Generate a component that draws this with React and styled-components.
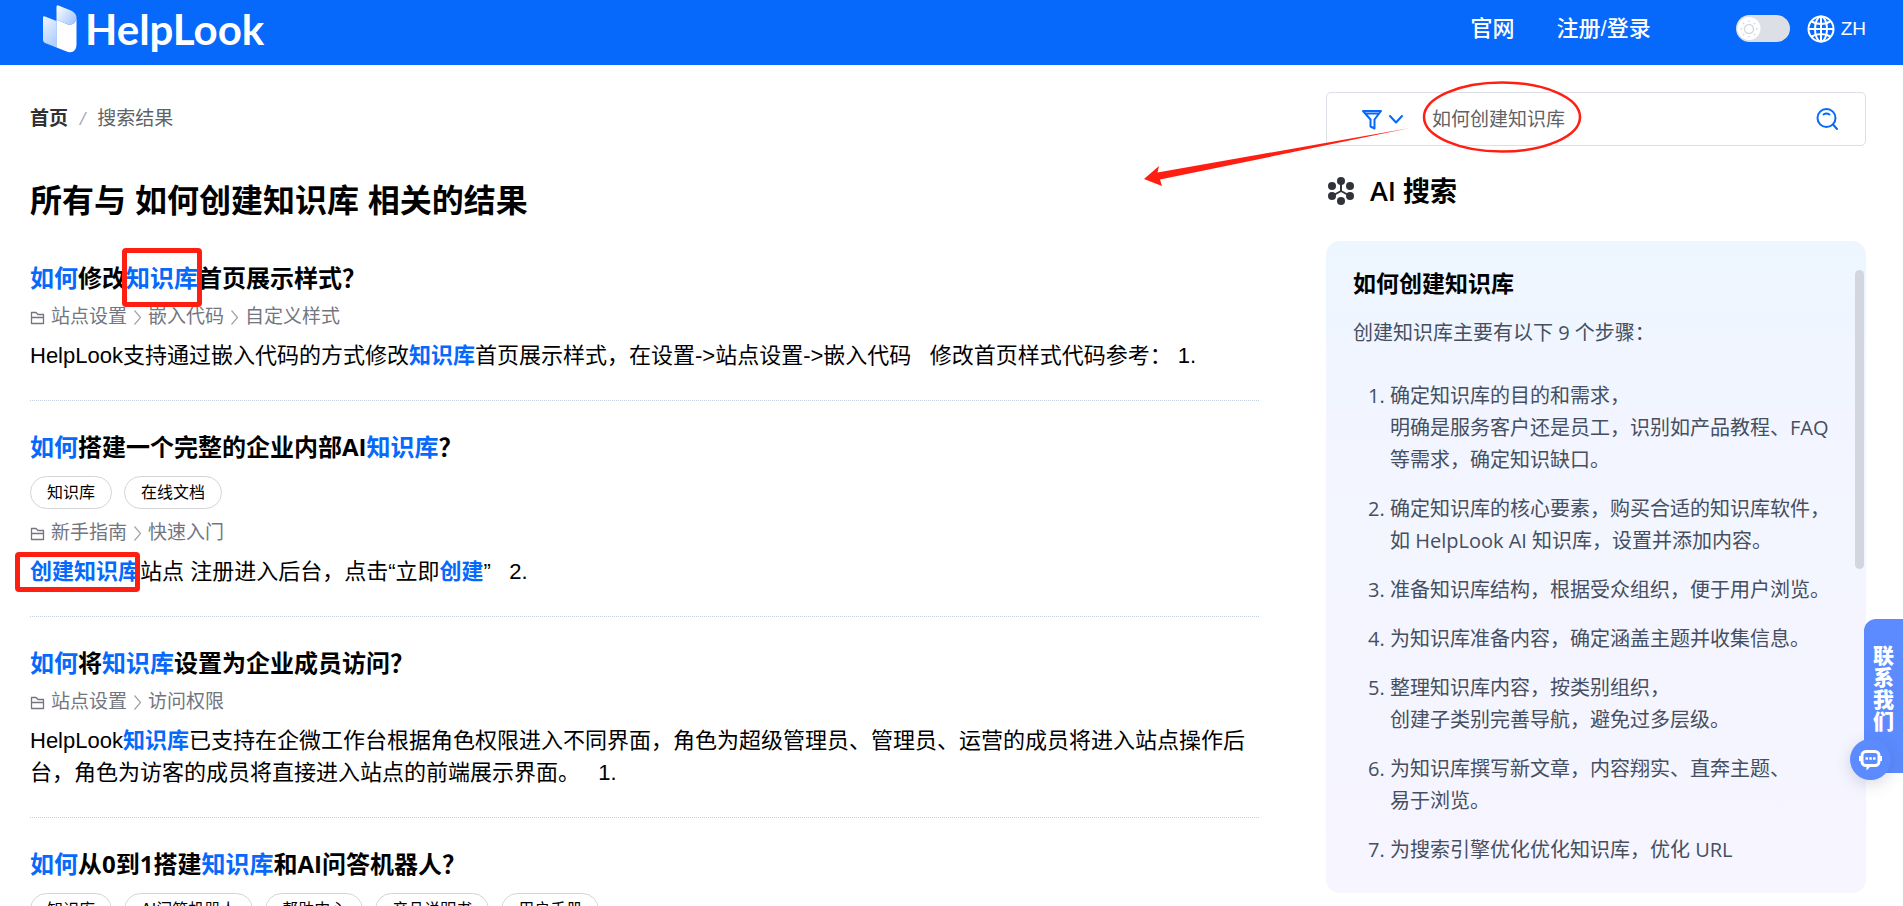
import React from "react";
import styled, { createGlobalStyle } from "styled-components";

const GlobalStyle = createGlobalStyle`
  *, *::before, *::after { box-sizing: border-box; }
  body {
    margin: 0;
    color: #000;
    background: #fff;
    font-family: "Liberation Sans", "Noto Sans CJK SC", sans-serif;
    font-size: 22px;
  }
  button, input { font: inherit; color: inherit; }
  button { padding: 0; border: 0; background: none; cursor: pointer; }
  a { color: inherit; text-decoration: none; }
  svg { display: block; flex: none; }
  h1, h2, h3, p, ol, ul { margin: 0; padding: 0; }
`;

const humanist = `"Open Sans", "Noto Sans CJK SC", sans-serif`;
const blue = "#0669fb";
const red = "#ff1e12";

const Page = styled.div`
  height: 100vh;
  overflow: hidden auto;
  scrollbar-width: none;
`;

const Header = styled.header`
  display: flex;
  align-items: center;
  justify-content: space-between;
  height: 65px;
  padding: 0 37px 8px 43px;
  color: #fff;
  background: ${blue};
`;

const Brand = styled.a`
  display: flex;
  align-items: center;
  gap: 7px;
  font: 700 42px/48px Lato, "Liberation Sans", sans-serif;
`;

const Nav = styled.nav`
  display: flex;
  align-items: center;
  gap: 42px;
  font-weight: 500;
  line-height: 32px;
`;

const Tools = styled.div`
  display: flex;
  align-items: center;
  gap: 17px;
  margin-left: 43px;
`;

const ThemeSwitch = styled.label`
  position: relative;
  display: block;
  width: 54px;
  height: 27px;
  svg {
    position: absolute;
    top: 4px;
    left: 3px;
    pointer-events: none;
  }
`;

const SwitchInput = styled.input`
  display: block;
  appearance: none;
  width: 100%;
  height: 100%;
  margin: 0;
  border-radius: 14px;
  background: radial-gradient(circle at 13px 50%, #fff 11px, transparent 12px) #dcdfe6;
`;

const Language = styled.button`
  display: flex;
  align-items: center;
  gap: 6px;
  font-size: 19px;
  font-weight: 500;
`;

const Main = styled.main`
  display: grid;
  grid-template-columns: minmax(0, 1fr) 540px;
  column-gap: 67px;
  padding: 27px 37px 13px 30px;
`;

const Results = styled.section`
  padding-top: 13px;
`;

const Breadcrumb = styled.nav`
  display: flex;
  gap: 12px;
  color: #606266;
  font-size: 19px;
  line-height: 28px;
  a { color: #303133; font-weight: 700; }
  i { color: #a8abb2; }
`;

const Title = styled.h1`
  margin-top: 44px;
  font-size: 32px;
  line-height: 48px;
`;

const ResultList = styled.ul`
  margin-top: 7px;
  list-style: none;
`;

const Result = styled.li`
  padding: 28px 0;
  border-bottom: 1px dotted #c3cede;
`;

const ResultTitle = styled.h2`
  font-family: ${humanist};
  font-size: 24px;
  line-height: 36px;
`;

const Tags = styled.div`
  display: flex;
  flex-wrap: wrap;
  gap: 12px;
  padding: 11px 0 3px;
`;

const Tag = styled.a`
  padding: 0 16px;
  border: 1px solid #d4d4d8;
  border-radius: 17px;
  font-size: 16px;
  line-height: 31px;
`;

const Path = styled.div`
  display: flex;
  align-items: center;
  gap: 6px;
  margin-top: 7px;
  color: #73767f;
  font-size: 19px;
  line-height: 28px;
`;

const Excerpt = styled.p`
  margin-top: 9px;
  line-height: 32px;
`;

const Hit = styled.em`
  color: ${blue};
  font-style: normal;
  font-weight: 700;
`;

const BoxedHit = styled(Hit)`
  position: relative;
  display: inline-block;
  &::after {
    content: "";
    position: absolute;
    inset: ${(p) => p.$outset};
    border: 5px solid ${red};
    border-radius: 4px;
  }
`;

const SearchBox = styled.form`
  position: relative;
  display: flex;
  align-items: center;
  height: 54px;
  padding: 0 26px 0 34px;
  border: 1px solid #dcdfe6;
  border-radius: 5px;
  color: ${blue};
`;

const FilterButton = styled.button`
  display: flex;
  align-items: center;
  gap: 5px;
`;

const SearchInput = styled.input`
  flex: 1;
  min-width: 0;
  margin-left: 28px;
  padding: 2px 0 0;
  border: 0;
  outline: 0;
  background: none;
  color: #606266;
  font-size: 19px;
  line-height: 28px;
`;

const SearchMarkup = styled.svg`
  position: absolute;
  top: -12px;
  left: -185px;
  pointer-events: none;
`;

const AiHeading = styled.h2`
  display: flex;
  align-items: center;
  gap: 15px;
  margin-top: 25px;
  font: 600 27px/40px ${humanist};
`;

const AnswerCard = styled.article`
  position: relative;
  margin-top: 30px;
  padding: 26px 27px 27px;
  border-radius: 14px;
  color: #454f5f;
  background: linear-gradient(#edf6ff, #f2f5ff 26%, #f7f5ff);
  font: 20px/32px ${humanist};
`;

const AnswerTitle = styled.h3`
  color: #000;
  font-size: 23px;
  line-height: 32px;
`;

const AnswerLead = styled.p`
  margin-top: 18px;
`;

const Steps = styled.ol`
  display: grid;
  gap: 17px;
  margin-top: 31px;
  padding-left: 37px;
`;

const ScrollThumb = styled.span`
  position: absolute;
  top: 29px;
  right: 2px;
  width: 9px;
  height: 299px;
  border-radius: 5px;
  background: #d2d6df;
`;

const Contact = styled.aside`
  position: fixed;
  top: 619px;
  right: 0;
`;

const ContactTab = styled.button`
  display: block;
  width: 39px;
  height: 154px;
  padding: 26px 9px 0;
  border-radius: 12px 0 0 0;
  color: #fff;
  background: #5b8bfe;
  font-size: 21px;
  font-weight: 900;
  line-height: 22px;
  span { display: block; height: 128px; }
`;

const ChatButton = styled.button`
  position: absolute;
  top: 120px;
  right: 12px;
  display: grid;
  place-items: center;
  width: 41px;
  height: 41px;
  border-radius: 50%;
  background: #5b8bfe;
  box-shadow: 0 4px 16px rgba(60, 70, 110, 0.2);
`;

const LogoMark = () => (
  <svg width="35" height="48" viewBox="0 0 35 48" aria-hidden="true">
    <defs>
      <linearGradient id="page-left" x1="0" y1="0" x2="0.4" y2="1">
        <stop offset="0" stopColor="#f0f6ff" />
        <stop offset="1" stopColor="#b4d0fe" />
      </linearGradient>
      <linearGradient id="page-fold" x1="0" y1="0" x2="1" y2="0.7">
        <stop offset="0" stopColor="#fff" />
        <stop offset="1" stopColor="#a9c8fe" />
      </linearGradient>
    </defs>
    <path d="M0 12.500Q0 10.500 2 11.500L13.500 16V42.500L2 38Q0 37 0 35Z" fill="url(#page-left)" />
    <path d="M13.500 14.500L25 19.500Q32 20.500 33.500 13V40Q33 48.500 25 47L13.500 42.500Z" fill="#fff" />
    <path d="M13.500 2Q13.500-.5 16 .7L28 5.500Q33.500 8 33.500 13Q32 20.500 25 19.500L13.500 14.500Z" fill="url(#page-fold)" />
  </svg>
);

const Sun = () => (
  <svg width="20" height="20" viewBox="0 0 20 20" fill="none" stroke="#d5d9e2" strokeWidth="1.500" strokeLinecap="round" aria-hidden="true">
    <circle cx="10" cy="10" r="4.500" />
    <path d="M10 2v.6M10 17.400v.6M2 10h.6M17.400 10h.6M4.400 4.400l.4.4M15.200 15.200l.4.4M4.400 15.600l.4-.4M15.200 4.800l.4-.4" />
  </svg>
);

const Globe = () => (
  <svg width="28" height="28" viewBox="0 0 28 28" fill="none" stroke="#fff" strokeWidth="2" aria-hidden="true">
    <circle cx="14" cy="14" r="12.500" />
    <ellipse cx="14" cy="14" rx="6" ry="12.500" />
    <path d="M1.500 14h25M14 1.500v25M4.500 6.500q9.500 5 19 0M4.500 21.500q9.500-5 19 0" />
  </svg>
);

const Funnel = () => (
  <svg width="22" height="22" viewBox="0 0 22 22" fill="none" stroke="currentColor" strokeWidth="2" strokeLinejoin="round" aria-hidden="true">
    <path d="M2 3H20L13.500 11.500V20.500L9.500 18.500V11.500ZM3.500 5.500H18.500" />
  </svg>
);

const ChevronDown = () => (
  <svg width="16" height="16" viewBox="0 0 16 16" fill="none" stroke="currentColor" strokeWidth="2" strokeLinecap="round" strokeLinejoin="round" aria-hidden="true">
    <path d="M2 5L8 11.500L14 5" />
  </svg>
);

const Magnifier = () => (
  <svg width="24" height="24" viewBox="0 0 24 24" fill="none" stroke="currentColor" strokeWidth="2" strokeLinecap="round" aria-hidden="true">
    <circle cx="11.500" cy="11" r="9" />
    <path d="M18 17.500L22 22M8.500 7.500Q11.500 5.500 14.500 7.500" />
  </svg>
);

const Nodes = () => (
  <svg width="29" height="30" viewBox="0 0 29 30" fill="#303339" stroke="#303339" aria-hidden="true">
    <path d="M15 5V15L6 20M15 15L24 20" fill="none" strokeWidth="2" />
    <g stroke="none">
      <circle cx="15" cy="5" r="4" />
      <circle cx="6" cy="10" r="4" />
      <circle cx="24" cy="10" r="4" />
      <circle cx="6" cy="20" r="4" />
      <circle cx="24" cy="20" r="4" />
      <circle cx="15" cy="25" r="4" />
    </g>
  </svg>
);

const Folder = () => (
  <svg width="15" height="15" viewBox="0 0 15 15" fill="none" stroke="currentColor" strokeWidth="1.300" strokeLinejoin="round" aria-hidden="true">
    <path d="M1.500 13.500V2.500H6L8 4.500H13.500V13.500ZM1.500 7.500H13.500" />
  </svg>
);

const ChevronRight = () => (
  <svg width="9" height="16" viewBox="0 0 9 16" fill="none" stroke="#a0a3aa" strokeWidth="1.200" aria-hidden="true">
    <path d="M1.500 1.500L7.500 8.500L1.500 15.500" />
  </svg>
);

const Chat = () => (
  <svg width="23" height="22" viewBox="0 0 23 22" fill="none" stroke="#fff" strokeWidth="3" aria-hidden="true">
    <rect x="3" y="2.500" width="17" height="14" rx="4" />
    <path d="M1 7v5M22 7v5" strokeWidth="2" />
    <path d="M7.500 16v5.500l5-5Z" fill="#fff" stroke="none" />
    <path d="M6.500 9.500h2.500M10.300 9.500h2.500M14 9.500h2.500" strokeWidth="2.500" />
  </svg>
);

const crumbs = (names) => (
  <Path>
    <Folder />
    {names.map((name, i) => (
      <React.Fragment key={name}>
        {i > 0 && <ChevronRight />}
        <a href="#category">{name}</a>
      </React.Fragment>
    ))}
  </Path>
);

const tags = (names) => (
  <Tags>
    {names.map((name) => (
      <Tag key={name} href="#tag">{name}</Tag>
    ))}
  </Tags>
);

const steps = [
  ["确定知识库的目的和需求，", "明确是服务客户还是员工，识别如产品教程、FAQ 等需求，确定知识缺口。"],
  ["确定知识库的核心要素，购买合适的知识库软件，", "如 HelpLook AI 知识库，设置并添加内容。"],
  ["准备知识库结构，根据受众组织，便于用户浏览。"],
  ["为知识库准备内容，确定涵盖主题并收集信息。"],
  ["整理知识库内容，按类别组织，", "创建子类别完善导航，避免过多层级。"],
  ["为知识库撰写新文章，内容翔实、直奔主题、", "易于浏览。"],
  ["为搜索引擎优化优化知识库，优化 URL"],
];

export default function App() {
  return (
    <Page lang="zh-CN">
      <GlobalStyle />
      <Header>
        <Brand href="#home">
          <LogoMark />
          HelpLook
        </Brand>
        <Nav>
          <a href="#site">官网</a>
          <a href="#login">注册/登录</a>
          <Tools>
            <ThemeSwitch>
              <SwitchInput type="checkbox" role="switch" aria-label="切换主题" />
              <Sun />
            </ThemeSwitch>
            <Language type="button">
              <Globe />
              ZH
            </Language>
          </Tools>
        </Nav>
      </Header>

      <Main>
        <Results>
          <Breadcrumb>
            <a href="#home">首页</a>
            <i>/</i>
            <span>搜索结果</span>
          </Breadcrumb>
          <Title>所有与 如何创建知识库 相关的结果</Title>
          <ResultList>
            <Result>
              <ResultTitle>
                <a href="#r1"><Hit>如何</Hit>修改<BoxedHit $outset="-12px -4px -11px">知识库</BoxedHit>首页展示样式？</a>
              </ResultTitle>
              {crumbs(["站点设置", "嵌入代码", "自定义样式"])}
              <Excerpt>
                HelpLook支持通过嵌入代码的方式修改<Hit>知识库</Hit>首页展示样式，在设置-&gt;站点设置-&gt;嵌入代码&nbsp;&nbsp; 修改首页样式代码参考： 1.
              </Excerpt>
            </Result>
            <Result>
              <ResultTitle>
                <a href="#r2"><Hit>如何</Hit>搭建一个完整的企业内部AI<Hit>知识库</Hit>？</a>
              </ResultTitle>
              {tags(["知识库", "在线文档"])}
              {crumbs(["新手指南", "快速入门"])}
              <Excerpt>
                <BoxedHit $outset="-4px 0 -4px -15px">创建知识库</BoxedHit>站点 注册进入后台，点击“立即<Hit>创建</Hit>”&nbsp;&nbsp; 2.
              </Excerpt>
            </Result>
            <Result>
              <ResultTitle>
                <a href="#r3"><Hit>如何</Hit>将<Hit>知识库</Hit>设置为企业成员访问？</a>
              </ResultTitle>
              {crumbs(["站点设置", "访问权限"])}
              <Excerpt>
                HelpLook<Hit>知识库</Hit>已支持在企微工作台根据角色权限进入不同界面，角色为超级管理员、管理员、运营的成员将进入站点操作后台，角色为访客的成员将直接进入站点的前端展示界面。&nbsp;&nbsp; 1.
              </Excerpt>
            </Result>
            <Result>
              <ResultTitle>
                <a href="#r4"><Hit>如何</Hit>从0到1搭建<Hit>知识库</Hit>和AI问答机器人？</a>
              </ResultTitle>
              {tags(["知识库", "AI问答机器人", "帮助中心", "产品说明书", "用户手册"])}
            </Result>
          </ResultList>
        </Results>

        <section>
          <SearchBox onSubmit={(e) => e.preventDefault()}>
            <FilterButton type="button" aria-label="筛选">
              <Funnel />
              <ChevronDown />
            </FilterButton>
            <SearchInput type="text" aria-label="搜索" defaultValue="如何创建知识库" />
            <button type="submit" aria-label="提交搜索">
              <Magnifier />
            </button>
            <SearchMarkup width="445" height="120" viewBox="0 0 445 120" aria-hidden="true">
              <ellipse cx="360" cy="36" rx="78" ry="34.500" fill="none" stroke={red} strokeWidth="2.500" />
              <path d="M2 98L17 85L15.500 91.500L268 47L18 98.500L20 105Z" fill={red} />
            </SearchMarkup>
          </SearchBox>
          <AiHeading>
            <Nodes />
            AI 搜索
          </AiHeading>
          <AnswerCard>
            <AnswerTitle>如何创建知识库</AnswerTitle>
            <AnswerLead>创建知识库主要有以下 9 个步骤：</AnswerLead>
            <Steps>
              {steps.map(([first, rest]) => (
                <li key={first}>
                  {first}
                  {rest && <br />}
                  {rest}
                </li>
              ))}
            </Steps>
            <ScrollThumb />
          </AnswerCard>
        </section>
      </Main>

      <Contact>
        <ContactTab type="button"><span>联系我们</span></ContactTab>
        <ChatButton type="button" aria-label="在线聊天">
          <Chat />
        </ChatButton>
      </Contact>
    </Page>
  );
}
